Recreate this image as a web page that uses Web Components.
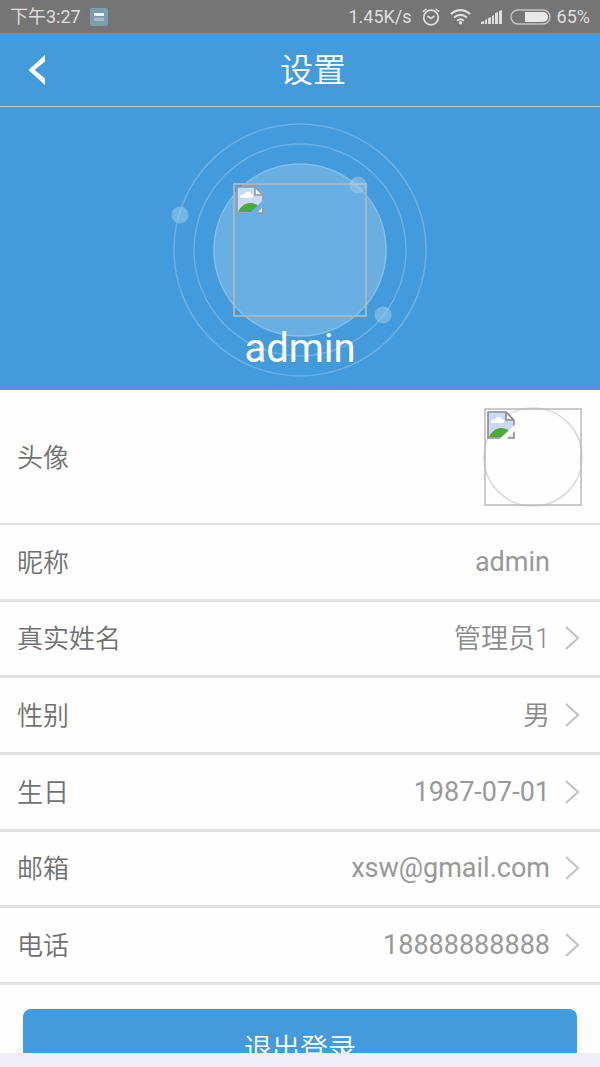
<!DOCTYPE html>
<html lang="zh-CN">
<head>
<meta charset="utf-8">
<meta name="viewport" content="width=device-width, initial-scale=1">
<title>设置</title>
<style>
  html, body {
    height: 100%;
    margin: 0;
  }

  body {
    --blue: #439bdc;
    --line: #e2e2e2;
    background: #efeef4;
    font-family: Roboto, "Noto Sans CJK SC", sans-serif;
  }
</style>
</head>
<body>
<settings-page>
  <status-bar slot="top" time="下午3:27" speed="1.45K/s" battery="65%"></status-bar>
  <nav-header slot="top">设置</nav-header>
  <profile-hero>admin</profile-hero>
  <setting-row label="头像" large><broken-image></broken-image></setting-row>
  <setting-list>
    <setting-row label="昵称">admin</setting-row>
    <setting-row label="真实姓名" href="#name" light>管理员1</setting-row>
    <setting-row label="性别" href="#gender" light>男</setting-row>
    <setting-row label="生日" href="#birthday">1987-07-01</setting-row>
    <setting-row label="邮箱" href="#email">xsw@gmail.com</setting-row>
    <setting-row label="电话" href="#phone">18888888888</setting-row>
  </setting-list>
  <logout-button>退出登录</logout-button>
</settings-page>

<script>
// Thumbnail shown in place of a missing picture, 28x28 in its own units.
const thumb = (fill, frame) => `
  <path d="M1 1h18l8 8v18H1z" fill="#ccd8f6"/>
  <path d="M4 11c0-3 3-3 4-2 1-4 6-4 7-1 3 0 3 3 1 4H5z" fill="#fff"/>
  <path d="M2 26c2-5 7-9 12-9 6 0 11 4 13 9z" fill="#4dab35"/>
  <path d="M24 22l3-2v7h-5z" fill="#e4eaf8"/>
  <path d="M19 1v8h8z" fill="#f4f4f4"/>
  <path d="M1 1h18l8 8v18H1zM19 1v8h8" fill="none" stroke="${frame}" stroke-width="1.600"/>
  <path d="M12 28.500L28.500 13v6.500L19 28.500z" fill="${fill}"/>
`;

class SettingsPage extends HTMLElement {
  constructor() {
    super();
    this.attachShadow({mode: 'open'});
    this.shadowRoot.innerHTML = `
      <style>
        :host {
          display: flex;
          flex-direction: column;
          height: 100vh;
          box-sizing: border-box;
          padding-bottom: 14px;
        }

        main {
          flex: 1;
          min-height: 0;
          overflow: hidden;
          background: #fefefe;
        }
      </style>
      <slot name="top"></slot>
      <main><slot></slot></main>
    `;
  }
}

class StatusBar extends HTMLElement {
  constructor() {
    super();
    this.attachShadow({mode: 'open'});
    this.shadowRoot.innerHTML = `
      <style>
        :host {
          display: flex;
          align-items: center;
          height: 33px;
          padding: 0 10px;
          background: #757575;
          color: #dedede;
          font-size: 18px;
          line-height: 24px;
        }

        svg { display: block; }
        .app { margin-left: 9px; }

        .right {
          display: flex;
          align-items: center;
          gap: 10px;
          margin-left: auto;
        }

        .power {
          display: flex;
          align-items: center;
          gap: 6px;
          margin-left: -2px;
        }
      </style>
      <span>${this.getAttribute('time')}</span>
      <svg class="app" width="18" height="18" viewBox="0 0 18 18">
        <rect width="18" height="18" rx="2" fill="#7c9dad"/>
        <path d="M4 5h10v3H4z" fill="#f4f7f8"/>
        <path d="M4 9h10v1H4z" fill="#8ca6b2"/>
        <path d="M4 10h10v3H4z" fill="#a5bcc7"/>
      </svg>
      <div class="right">
        <span>${this.getAttribute('speed')}</span>
        <svg width="18" height="18" viewBox="0 0 18 18" fill="none" stroke="#dedede" stroke-width="1.700">
          <circle cx="9" cy="9.500" r="7.300"/>
          <path d="M5.500 8L9 10.500l3.500-2.500M.8 3.700L4.500.800M17.200 3.700L13.500.800"/>
        </svg>
        <svg width="21" height="18" viewBox="0 0 22 18" fill="none" stroke="#dedede" stroke-width="2.300">
          <path d="M1 6c6-5.500 14-5.500 20 0M4.300 9.500c4-3.600 9.400-3.600 13.400 0M7.500 13c2-2 5-2 7 0"/>
          <circle cx="11" cy="15" r="1.800" fill="#dedede" stroke="none"/>
        </svg>
        <svg width="21" height="18" viewBox="0 0 21 18" fill="#dedede">
          <path d="M0 16v-2l3-1v3zM4 16v-4l2-1v5zM7 16v-6l3-1v7zM11 16V8l2-1v9zM14 16V5l3-1v12zM18 16V3l3-1v14z"/>
        </svg>
        <div class="power">
          <svg width="41" height="16" viewBox="0 0 41 16">
            <rect x="1" y="1" width="39" height="14" rx="7" fill="none" stroke="#c4c4c4" stroke-width="1.500"/>
            <path d="M15 3h18a5 5 0 0 1 0 10H15z" fill="#e8e8e8"/>
          </svg>
          <span>${this.getAttribute('battery')}</span>
        </div>
      </div>
    `;
  }
}

class NavHeader extends HTMLElement {
  constructor() {
    super();
    this.attachShadow({mode: 'open'});
    this.shadowRoot.innerHTML = `
      <style>
        :host {
          display: flex;
          align-items: center;
          height: 73px;
          padding: 0 20px 0 26px;
          border-bottom: 1px solid #a1cdee;
          background: var(--blue);
          color: #fff;
        }

        button {
          width: 20px;
          padding: 0;
          border: 0;
          background: none;
        }

        svg { display: block; }

        h1 {
          flex: 1;
          margin: 0;
          padding-top: 3px;
          font-size: 33px;
          font-weight: 350;
          line-height: 48px;
          text-align: center;
        }
      </style>
      <button type="button" aria-label="返回">
        <svg width="20" height="32" viewBox="0 0 20 32">
          <path d="M19 1v6.500L8.700 16 19 24.500v6.500L2.500 16z" fill="#fff"/>
        </svg>
      </button>
      <h1><slot></slot></h1>
    `;
  }
}

class ProfileHero extends HTMLElement {
  constructor() {
    super();
    this.attachShadow({mode: 'open'});
    this.shadowRoot.innerHTML = `
      <style>
        :host {
          display: grid;
          justify-items: center;
          padding: 16px 0 13px;
          background: var(--blue);
          color: #fff;
        }

        svg, .name { grid-area: 1 / 1; }

        svg {
          display: block;
          overflow: visible;
        }

        .name {
          align-self: end;
          font-size: 40px;
          line-height: 56px;
        }
      </style>
      <svg width="254" height="254" viewBox="0 0 254 254" fill="none">
        <g stroke="#69b1e6" stroke-width="1.500">
          <circle cx="127" cy="127" r="126"/>
          <circle cx="127" cy="127" r="106"/>
          <circle cx="127" cy="127" r="86" fill="#69afe1" stroke="#83bfeb"/>
        </g>
        <rect x="61" y="61" width="132" height="132" stroke="#a6b6c3" stroke-width="2"/>
        <g transform="translate(63 63)">${thumb('#69afe1', '#8f9ba3')}</g>
        <g fill="#a5d0f0" fill-opacity=".5">
          <circle cx="7" cy="92" r="8.500"/>
          <circle cx="185" cy="62" r="8.500"/>
          <circle cx="210" cy="192" r="8.500"/>
        </g>
      </svg>
      <div class="name"><slot></slot></div>
    `;
  }
}

class BrokenImage extends HTMLElement {
  constructor() {
    super();
    this.attachShadow({mode: 'open'});
    this.shadowRoot.innerHTML = `
      <style>
        :host, svg { display: block; }
      </style>
      <svg width="100" height="100" viewBox="0 0 100 100" fill="none">
        <circle cx="50" cy="50" r="49" stroke="#d9d9d9" stroke-width="1.500"/>
        <rect x="2" y="2" width="96" height="96" stroke="#b9b9b9" stroke-width="1.500"/>
        <g transform="translate(4 4)">${thumb('#fefefe', '#8a8c90')}</g>
      </svg>
    `;
  }
}

class SettingList extends HTMLElement {
  constructor() {
    super();
    this.attachShadow({mode: 'open'});
    this.shadowRoot.innerHTML = `
      <style>
        :host {
          display: grid;
          grid-auto-rows: 1fr;
          min-height: 460px;
        }

        ::slotted(*) { border-bottom: 3px solid var(--line); }
      </style>
      <slot></slot>
    `;
  }
}

class SettingRow extends HTMLElement {
  constructor() {
    super();
    const href = this.getAttribute('href');
    const tag = href ? 'a' : 'div';

    this.attachShadow({mode: 'open'});
    this.shadowRoot.innerHTML = `
      <style>
        :host {
          display: grid;
          border-bottom: 2px solid var(--line);
          font-size: 27px;
          line-height: 40px;
        }

        .row {
          display: flex;
          align-items: center;
          justify-content: space-between;
          padding: 0 20px 0 17px;
          color: #717171;
          text-decoration: none;
        }

        .label {
          padding-top: 2px;
          font-size: 26px;
          font-weight: 350;
        }

        .value {
          padding-right: 30px;
          color: #999;
        }

        a .value {
          margin-left: auto;
          padding-right: 15px;
        }

        svg { display: block; }

        :host([light]) .value {
          padding-top: 2px;
          color: #8c8c8c;
          font-weight: 350;
        }

        :host([large]) .row {
          min-height: 133px;
          padding-right: 17px;
        }

        :host([large]) .value { padding: 0; }
      </style>
      <${tag} class="row" ${href ? `href="${href}"` : ''}>
        <span class="label">${this.getAttribute('label')}</span>
        <span class="value"><slot></slot></span>
        ${href ? `
          <svg width="15" height="24" viewBox="0 0 15 24">
            <path d="M1 1l12 11L1 23" fill="none" stroke="#c4c4c4" stroke-width="2.200"/>
          </svg>` : ''}
      </${tag}>
    `;
  }
}

class LogoutButton extends HTMLElement {
  constructor() {
    super();
    this.attachShadow({mode: 'open'});
    this.shadowRoot.innerHTML = `
      <style>
        :host {
          display: block;
          padding: 24px 23px;
        }

        button {
          width: 100%;
          height: 76px;
          padding: 0;
          border: 0;
          border-radius: 8px;
          background: var(--blue);
          color: #fff;
          font: inherit;
          font-size: 28px;
          font-weight: 350;
        }
      </style>
      <button type="button"><slot></slot></button>
    `;
  }
}

customElements.define('settings-page', SettingsPage);
customElements.define('status-bar', StatusBar);
customElements.define('nav-header', NavHeader);
customElements.define('profile-hero', ProfileHero);
customElements.define('broken-image', BrokenImage);
customElements.define('setting-list', SettingList);
customElements.define('setting-row', SettingRow);
customElements.define('logout-button', LogoutButton);
</script>
</body>
</html>
